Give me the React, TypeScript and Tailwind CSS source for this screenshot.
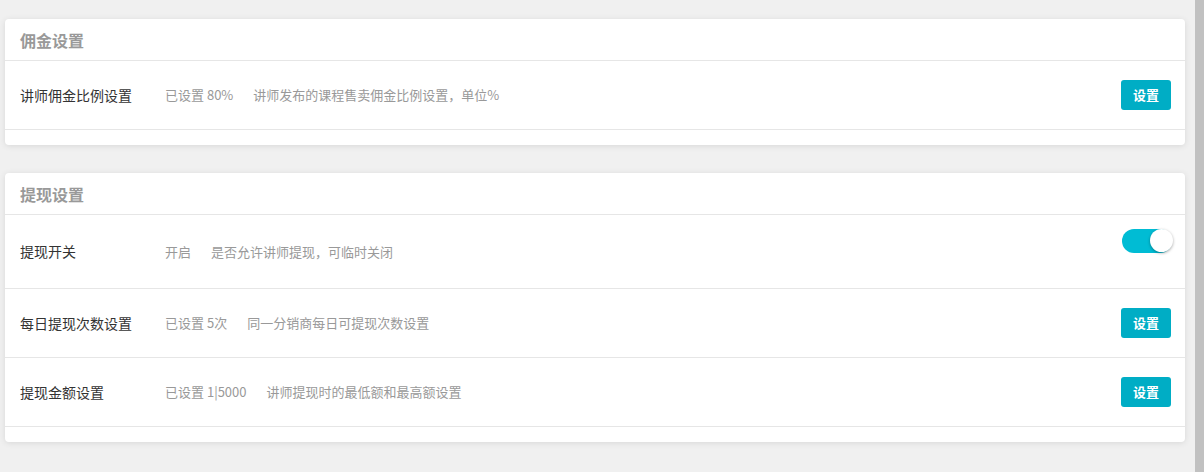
import React from "react";

type Row = {
    label: string;
    value: string;
    desc: string;
    action: "button" | "toggle";
};

const sections: Array<{ title: string; rows: Row[] }> = [
    {
        title: "佣金设置",
        rows: [
            {
                label: "讲师佣金比例设置",
                value: "已设置 80%",
                desc: "讲师发布的课程售卖佣金比例设置，单位%",
                action: "button",
            },
        ],
    },
    {
        title: "提现设置",
        rows: [
            {
                label: "提现开关",
                value: "开启",
                desc: "是否允许讲师提现，可临时关闭",
                action: "toggle",
            },
            {
                label: "每日提现次数设置",
                value: "已设置 5次",
                desc: "同一分销商每日可提现次数设置",
                action: "button",
            },
            {
                label: "提现金额设置",
                value: "已设置 1|5000",
                desc: "讲师提现时的最低额和最高额设置",
                action: "button",
            },
        ],
    },
];

function Toggle() {
    return (
        <div className="relative mr-[-1px] mt-[14px] h-[24px] w-[50px] self-start rounded-full bg-[#00bcd4]">
            <div className="absolute right-[-1px] top-[0px] h-[23px] w-[23px] rounded-full bg-white shadow-[0_1px_3px_rgba(0,0,0,0.35)]" />
        </div>
    );
}

function SetButton() {
    return (
        <button className="flex h-[30px] w-[50px] items-center justify-center rounded-[3px] bg-[#00adc5] text-[13px] font-bold text-white">
            设置
        </button>
    );
}

function SettingRow({ row, tall }: { row: Row; tall: boolean }) {
    return (
        <div
            className={
                tall
                    ? "flex h-[74px] items-center border-b border-[#e6e6e6] pl-[15px] pr-[14px]"
                    : "flex h-[69px] items-center border-b border-[#e6e6e6] pl-[15px] pr-[14px]"
            }
        >
            <div className="w-[145px] text-[14px] text-[#333]">{row.label}</div>
            <div className="text-[13px] text-[#999]">{row.value}</div>
            <div className="ml-[20px] flex-1 text-[13px] text-[#999]">{row.desc}</div>
            {row.action === "button" ? <SetButton /> : <Toggle />}
        </div>
    );
}

export default function App() {
    return (
        <div
            className="flex h-[472px] w-full bg-[#f0f0f0]"
            style={{ fontFamily: '"Noto Sans CJK SC", "Noto Sans", sans-serif' }}
        >
            <div className="flex flex-1 flex-col gap-[28px] pb-[30px] pl-[5px] pr-[10px] pt-[19px]">
                {sections.map((section) => (
                    <div
                        key={section.title}
                        className="rounded-[4px] bg-white pb-[15px] shadow-[0_1px_6px_rgba(0,0,0,0.1)]"
                    >
                        <div className="flex h-[42px] items-center border-b border-[#e6e6e6] pl-[15px] text-[16px] font-bold text-[#999]">
                            {section.title}
                        </div>
                        {section.rows.map((row) => (
                            <SettingRow
                                key={row.label}
                                row={row}
                                tall={row.action === "toggle"}
                            />
                        ))}
                    </div>
                ))}
            </div>
            <div className="w-[9px] bg-[#c1c1c1]" />
        </div>
    );
}
